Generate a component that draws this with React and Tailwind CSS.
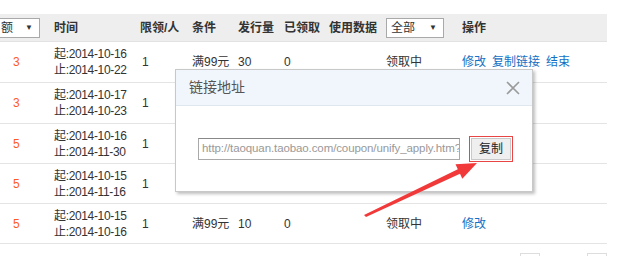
import React from "react";

const rows = [
  { n: "3", from: "2014-10-16", to: "2014-10-22", cond: "满99元", qty: "30", got: "0", status: "领取中", ops: ["修改", "复制链接", "结束"], h: "h-[41px]" },
  { n: "3", from: "2014-10-17", to: "2014-10-23", h: "h-[41px]" },
  { n: "5", from: "2014-10-16", to: "2014-11-30", h: "h-[40px]" },
  { n: "5", from: "2014-10-15", to: "2014-11-16", h: "h-[40px]" },
  { n: "5", from: "2014-10-15", to: "2014-10-16", cond: "满99元", qty: "10", got: "0", status: "领取中", ops: ["修改"], h: "h-[40px]" },
];

const cols = "grid grid-cols-[54px_86px_52px_46px_46px_45px_57px_76px_145px]";

export default function App() {
  return (
    <div
      className="relative w-[630px] h-[256px] overflow-hidden bg-white text-[12px] text-[#333]"
      style={{ fontFamily: '"Liberation Sans", "Noto Sans CJK SC", sans-serif' }}
    >
      <div className="w-[607px] pt-[14px]">
        {/* 表头 */}
        <div className={`${cols} h-[28px] items-center bg-[#eeeeee] border-b border-[#e2e2e2] font-bold`}>
          <div>
            <div className="w-[40px] h-[20px] bg-white border border-l-0 border-[#a9a9a9] flex items-center justify-between pl-[1px] pr-[6px] font-normal">
              <span>额</span>
              <span className="text-[8px]">▼</span>
            </div>
          </div>
          <div>时间</div>
          <div>限领/人</div>
          <div>条件</div>
          <div>发行量</div>
          <div>已领取</div>
          <div>使用数据</div>
          <div>
            <div className="w-[58px] h-[20px] bg-white border border-[#a9a9a9] flex items-center justify-between pl-[4px] pr-[6px] font-normal">
              <span>全部</span>
              <span className="text-[8px]">▼</span>
            </div>
          </div>
          <div>操作</div>
        </div>

        {/* 列表 */}
        {rows.map((r, i) => (
          <div key={i} className={`${cols} ${r.h} items-center border-b border-[#e4e4e4]`}>
            <div className="pl-[13px] text-[#ff5a1f]">{r.n}</div>
            <div className="leading-[16px] tracking-[-0.35px]">
              <div>起:{r.from}</div>
              <div>止:{r.to}</div>
            </div>
            <div className="pl-[2px]">1</div>
            <div>{r.cond}</div>
            <div>{r.qty}</div>
            <div>{r.got}</div>
            <div></div>
            <div>{r.status}</div>
            <div className="flex gap-[6px] text-[#1470c4]">
              {(r.ops || []).map((o) => (
                <span key={o}>{o}</span>
              ))}
            </div>
          </div>
        ))}

        {/* 分页 */}
        <div className="flex justify-end gap-[47px] pt-[9px]">
          <div className="w-[20px] h-[4px] border-t border-x border-[#ddd]"></div>
          <div className="w-[20px] h-[4px] border-t border-x border-[#ddd]"></div>
        </div>
      </div>

      {/* 弹窗 */}
      <div className="absolute left-[175px] top-[69px] w-[358px] h-[123px] bg-white border border-[#c8c8c8] shadow-[2px_2px_3px_rgba(0,0,0,0.25)]">
        <div className="h-[36px] bg-[#f1f6fc] border-b border-[#dfe6ee] flex items-center justify-between pl-[13px] pr-[12px]">
          <span className="text-[14px] text-[#555]">链接地址</span>
          <svg width="14" height="14" viewBox="0 0 14 14">
            <path d="M1 1L13 13M13 1L1 13" stroke="#9a9a9a" strokeWidth="1.6" />
          </svg>
        </div>
        <div className="flex items-center pl-[22px] pt-[32px]">
          <div className="w-[262px] h-[22px] border border-[#a9a9a9] border-t-[#888] flex items-center px-[3px] overflow-hidden whitespace-nowrap text-[11.5px] tracking-[-0.1px] text-[#999]">
            http://taoquan.taobao.com/coupon/unify_apply.htm?
          </div>
          <div className="ml-[11px] mr-[11px] outline outline-1 outline-[#e84545] outline-offset-[1px]">
            <div className="w-[40px] h-[22px] bg-[#efefef] border border-[#c9c9c9] flex items-center justify-center text-[#222]">
              复制
            </div>
          </div>
        </div>
      </div>

      {/* 红色箭头 */}
      <svg className="absolute left-0 top-0" width="630" height="256">
        <polygon
          points="364,215 457.8,169.2 455.5,164.3 477,163 462.3,178.7 460,173.8 366,217"
          fill="#f2393a"
        />
      </svg>
    </div>
  );
}
